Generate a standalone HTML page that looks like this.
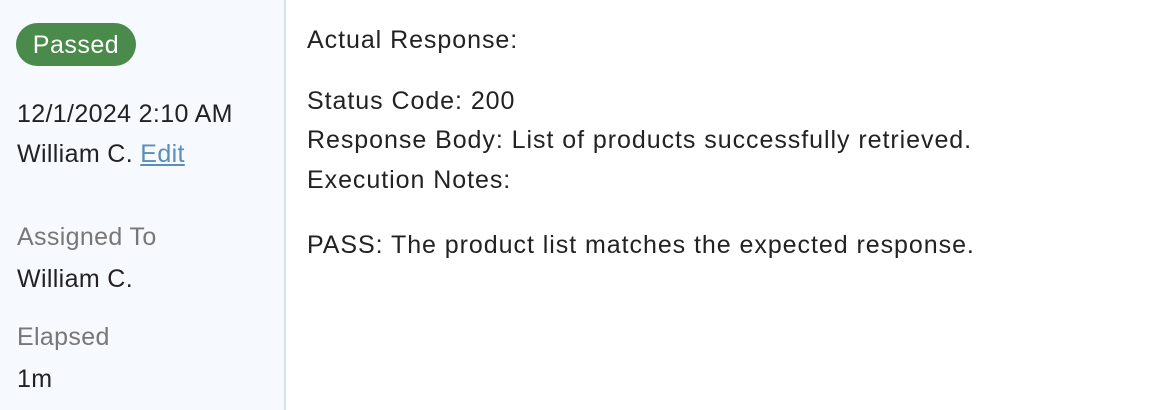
<!DOCTYPE html>
<html><head><meta charset="utf-8"><style>
html,body{margin:0;padding:0;width:1152px;height:410px;overflow:hidden;background:#fff;font-family:"Liberation Sans",sans-serif;color:#222;}
.side{position:absolute;left:0;top:0;width:284px;height:410px;background:#f6f9fe;border-right:2px solid #d6e1ee;}
.badge{position:absolute;left:16px;top:23px;width:120px;height:43px;border-radius:22px;background:#4a8a4a;color:#fff;font-size:25px;letter-spacing:0.5px;line-height:44px;text-align:center;}
.t{position:absolute;left:17px;font-size:25px;letter-spacing:0.35px;white-space:nowrap;line-height:28px;}
.g{color:#777;}
a{color:#5b8db8;text-decoration:underline;}
.m{position:absolute;left:307px;font-size:25px;letter-spacing:0.95px;white-space:nowrap;line-height:28px;}
</style></head><body>
<div class="side">
<div class="badge">Passed</div>
<div class="t" style="top:100px">12/1/2024 2:10 AM</div>
<div class="t" style="top:140px">William C. <a>Edit</a></div>
<div class="t g" style="top:223px">Assigned To</div>
<div class="t" style="top:265px">William C.</div>
<div class="t g" style="top:323px">Elapsed</div>
<div class="t" style="top:365px">1m</div>
</div>
<div class="m" style="top:26px">Actual Response:</div>
<div class="m" style="top:87px">Status Code: 200</div>
<div class="m" style="top:126px">Response Body: List of products successfully retrieved.</div>
<div class="m" style="top:166px">Execution Notes:</div>
<div class="m" style="top:231px">PASS: The product list matches the expected response.</div>
</body></html>
